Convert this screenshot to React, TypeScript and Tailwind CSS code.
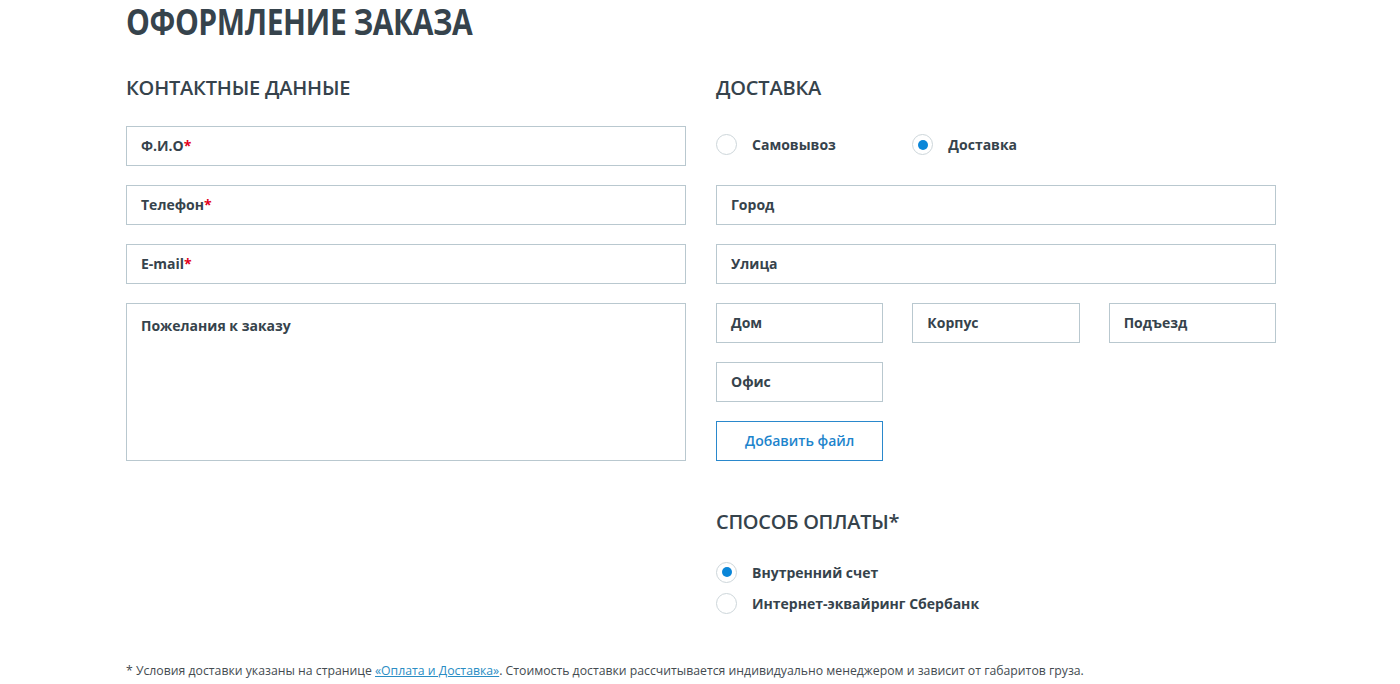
import React, { useState } from 'react';

const font = { fontFamily: '"Open Sans", "Liberation Sans", sans-serif' };

const Field: React.FC<{ label: string; required?: boolean }> = ({ label, required }) => (
  <div className="h-10 border border-[#b9c8cf] bg-white flex items-center px-[14px] pb-[2px] text-[14px] font-bold text-[#36434c]">
    {label}
    {required && <span className="text-[#e3001b]">*</span>}
  </div>
);

const Radio: React.FC<{ label: string; checked: boolean; onClick: () => void }> = ({ label, checked, onClick }) => (
  <button type="button" onClick={onClick} className="flex items-center gap-[15px] text-left">
    <span className="w-[21px] h-[21px] rounded-full border border-[#cdd6da] bg-white flex items-center justify-center shrink-0">
      {checked && <span className="w-[10px] h-[10px] rounded-full bg-[#0a86d8]" />}
    </span>
    <span className="text-[14px] font-bold text-[#36434c]">{label}</span>
  </button>
);

export default function App() {
  const [delivery, setDelivery] = useState<'pickup' | 'delivery'>('delivery');
  const [payment, setPayment] = useState<'internal' | 'sber'>('internal');

  return (
    <div className="min-h-[684px] bg-white pl-[126px]" style={font}>
      <h1 className="mt-[2px] h-[40px] text-[36px] leading-[40px] font-bold text-[#36434c] tracking-[-0.5px] whitespace-nowrap">
        <span className="inline-block origin-left scale-x-[0.834]">ОФОРМЛЕНИЕ ЗАКАЗА</span>
      </h1>

      <div className="grid grid-cols-[560px_560px] gap-x-[30px] mt-[36px]">
        {/* Contacts */}
        <div>
          <h2 className="text-[20px] leading-none font-semibold text-[#36434c] tracking-[-0.2px] mb-[28px]">КОНТАКТНЫЕ ДАННЫЕ</h2>
          <div className="flex flex-col gap-[19px]">
            <Field label="Ф.И.О" required />
            <Field label="Телефон" required />
            <Field label="E-mail" required />
            <div className="h-[158px] border border-[#b9c8cf] px-[14px] pt-[11px] text-[14px] font-bold text-[#36434c]">
              Пожелания к заказу
            </div>
          </div>
        </div>

        {/* Delivery */}
        <div>
          <h2 className="text-[20px] leading-none font-semibold text-[#36434c] tracking-[-0.2px] mb-[28px]">ДОСТАВКА</h2>
          <div className="flex flex-col gap-[19px]">
            <div className="h-10 grid grid-cols-3 gap-x-[29px] items-center pb-[3px]">
              <Radio label="Самовывоз" checked={delivery === 'pickup'} onClick={() => setDelivery('pickup')} />
              <Radio label="Доставка" checked={delivery === 'delivery'} onClick={() => setDelivery('delivery')} />
            </div>
            <Field label="Город" />
            <Field label="Улица" />
            <div className="grid grid-cols-3 gap-x-[29px]">
              <Field label="Дом" />
              <Field label="Корпус" />
              <Field label="Подъезд" />
            </div>
            <div className="grid grid-cols-3 gap-x-[29px]">
              <Field label="Офис" />
            </div>
            <div className="grid grid-cols-3 gap-x-[29px]">
              <button className="h-10 pb-[2px] border border-[#2a88cc] text-[14px] font-semibold text-[#1d84cc] bg-white">
                Добавить файл
              </button>
            </div>
          </div>

          <h2 className="mt-[51px] text-[20px] leading-none font-semibold text-[#36434c] tracking-[-0.3px]">СПОСОБ ОПЛАТЫ*</h2>
          <div className="mt-[28px] flex flex-col gap-[7px]">
            <div className="h-6 flex items-center">
              <Radio label="Внутренний счет" checked={payment === 'internal'} onClick={() => setPayment('internal')} />
            </div>
            <div className="h-6 flex items-center">
              <Radio label="Интернет-эквайринг Сбербанк" checked={payment === 'sber'} onClick={() => setPayment('sber')} />
            </div>
          </div>
        </div>
      </div>

      <p className="mt-[50px] text-[12.25px] leading-none text-[#444b50] whitespace-nowrap">
        * Условия доставки указаны на странице{' '}
        <a href="#" className="text-[#2a8dc4] underline">«Оплата и Доставка»</a>. Стоимость доставки рассчитывается
        индивидуально менеджером и зависит от габаритов груза.
      </p>
    </div>
  );
}
